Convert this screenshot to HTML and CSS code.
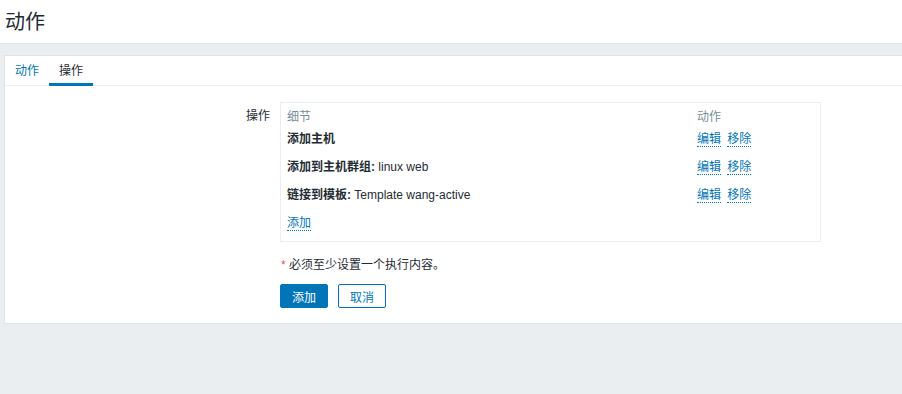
FILE: index.html
```html
<!DOCTYPE html>
<html lang="zh-CN">
<head>
    <meta charset="UTF-8">
    <title>动作</title>
    <link rel="stylesheet" href="styles.css">
</head>
<body>
    <header class="page-header">
        <h1>动作</h1>
    </header>
    <main class="wrapper">
        <div class="panel">
            <!-- tabs -->
            <ul class="tabs">
                <li><a href="#">动作</a></li>
                <li class="active"><a href="#">操作</a></li>
            </ul>
            <div class="form">
                <div class="form-row">
                    <label class="form-label">操作</label>
                    <div class="form-field">
                        <div class="ops-box">
                            <table class="ops">
                                <tr>
                                    <th class="col-detail">细节</th>
                                    <th class="col-action">动作</th>
                                </tr>
                                <tr>
                                    <td><b>添加主机</b></td>
                                    <td><a class="link" href="#">编辑</a> <a class="link" href="#">移除</a></td>
                                </tr>
                                <tr>
                                    <td><b>添加到主机群组:</b> linux web</td>
                                    <td><a class="link" href="#">编辑</a> <a class="link" href="#">移除</a></td>
                                </tr>
                                <tr>
                                    <td><b>链接到模板:</b> Template wang-active</td>
                                    <td><a class="link" href="#">编辑</a> <a class="link" href="#">移除</a></td>
                                </tr>
                                <tr>
                                    <td colspan="2"><a class="link" href="#">添加</a></td>
                                </tr>
                            </table>
                        </div>
                        <div class="required"><span class="star">*</span> 必须至少设置一个执行内容。</div>
                        <div class="buttons">
                            <button class="btn btn-primary">添加</button>
                            <button class="btn btn-alt">取消</button>
                        </div>
                    </div>
                </div>
            </div>
        </div>
    </main>
</body>
</html>
```

FILE: styles.css
```css
/* General styling */
body {
    margin: 0;
    background-color: #ebeef0;
    color: #1f2c33;
    font-family: "Liberation Sans", Arial, "Noto Sans CJK SC", sans-serif;
    font-size: 12px;
    line-height: 14px;
}
a {
    text-decoration: none;
}
.page-header {
    background-color: #fff;
    height: 43px;
    border-bottom: 1px solid #dfe4e7;
}
.page-header h1 {
    margin: 0;
    padding: 1px 0 0 5px;
    font-size: 20px;
    font-weight: normal;
    line-height: 42px;
}
.wrapper {
    padding: 11px 0 0 4px;
}
.panel {
    background-color: #fff;
    border: 1px solid #dfe4e7;
    border-right: none;
}
/* Tabs */
.tabs {
    display: flex;
    margin: 0;
    padding: 0;
    list-style: none;
    border-bottom: 1px solid #ebeef0;
}
.tabs li {
    margin-bottom: -1px;
    border-bottom: 3px solid transparent;
}
.tabs li a {
    display: block;
    padding: 4px 10px 0 10px;
    line-height: 23px;
    color: #0275b8;
}
.tabs li.active {
    border-bottom-color: #0275b8;
}
.tabs li.active a {
    color: #1f2c33;
}
/* Form */
.form {
    padding: 16px 0 15px 0;
}
.form-row {
    display: flex;
}
.form-label {
    width: 275px;
    text-align: right;
    padding-top: 7px;
    padding-right: 10px;
    box-sizing: border-box;
}
.ops-box {
    width: 539px;
    border: 1px solid #ebeef0;
    padding: 0 0 4px 0;
}
.ops {
    border-collapse: collapse;
    width: 100%;
}
.ops th {
    font-weight: normal;
    color: #768d99;
    text-align: left;
    padding: 7px 0 1px 6px;
}
.ops td {
    padding: 7px 0 7px 6px;
}
.ops .col-detail {
    width: 404px;
}
.link {
    color: #0275b8;
    border-bottom: 1px dotted #0275b8;
}
.ops td .link + .link {
    margin-left: 3px;
}
.required {
    margin-top: 16px;
    padding-left: 1px;
}
.star {
    color: #e45959;
}
.buttons {
    display: flex;
    gap: 10px;
    margin-top: 12px;
}
.btn {
    height: 24px;
    padding: 0 11px;
    font-family: inherit;
    font-size: 12px;
    border-radius: 2px;
    border: 1px solid #0275b8;
    cursor: pointer;
}
.btn-primary {
    background-color: #0275b8;
    color: #fff;
}
.btn-alt {
    background-color: #fff;
    color: #0275b8;
}
```
